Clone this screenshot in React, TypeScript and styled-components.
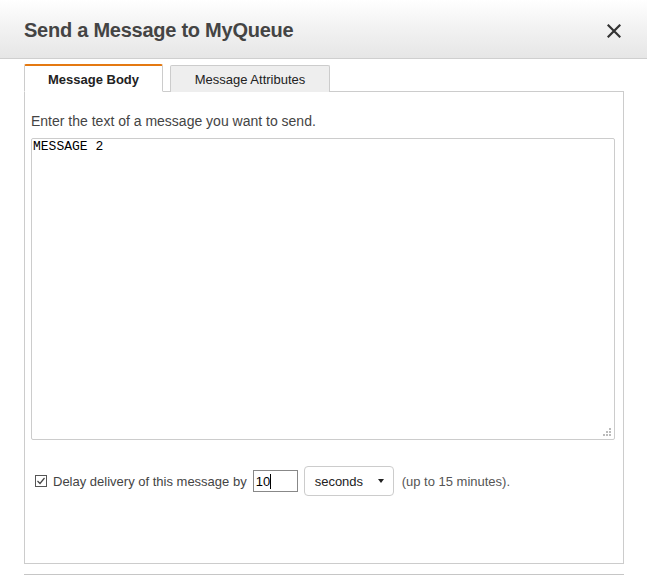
import React from "react";
import styled, { createGlobalStyle } from "styled-components";

const Global = createGlobalStyle`
  html, body { margin: 0; padding: 0; background: #fff; }
  body { font-family: Arial, "Liberation Sans", sans-serif; color: #444; }
`;

const Dialog = styled.div`
  width: 647px;
  height: 575px;
  display: flex;
  flex-direction: column;
  overflow: hidden;
`;

const Header = styled.header`
  height: 58px;
  border-bottom: 1px solid #cfcfcf;
  background: linear-gradient(to bottom, #ffffff 0%, #f4f4f4 40%, #e6e6e6 100%);
  display: flex;
  align-items: center;
  justify-content: space-between;
  padding: 0 24px;
  flex-shrink: 0;
`;

const Title = styled.h1`
  margin: 0;
  font-size: 20px;
  font-weight: bold;
  color: #444;
  letter-spacing: -0.25px;
  padding-top: 3px;
`;

const Close = styled.button`
  border: 0;
  background: transparent;
  padding: 0;
  width: 16px;
  height: 16px;
  margin-right: 1px;
  margin-top: 4px;
  display: flex;
  align-items: center;
  justify-content: center;
  cursor: pointer;
`;

const Body = styled.div`
  padding: 5px 23px 0 24px;
  display: flex;
  flex-direction: column;
`;

const Tabs = styled.div`
  display: flex;
  align-items: flex-end;
  gap: 7px;
  position: relative;
  z-index: 1;
  margin-bottom: -1px;
`;

const Tab = styled.div<{ $active?: boolean }>`
  box-sizing: border-box;
  display: flex;
  align-items: center;
  justify-content: center;
  font-size: 13px;
  color: #222;
  border: 1px solid #cccccc;
  border-radius: 2px 2px 0 0;
  ${(p) =>
    p.$active
      ? `
    width: 139px;
    height: 28px;
    border-top: 2px solid #e47911;
    border-bottom: 1px solid #fff;
    background: #fff;
    font-weight: bold;
    padding-top: 1px;
  `
      : `
    width: 160px;
    height: 27px;
    background: #eeeeee;
    border-bottom: 0;
    padding-top: 1px;
  `}
`;

const Panel = styled.section`
  box-sizing: border-box;
  height: 473px;
  border: 1px solid #cccccc;
  padding: 0 8px 0 6px;
  display: flex;
  flex-direction: column;
`;

const Prompt = styled.p`
  margin: 21px 0 0 0;
  font-size: 14px;
  line-height: 17px;
  color: #444;
`;

const AreaWrap = styled.div`
  position: relative;
  margin-top: 8px;
  width: 584px;
  height: 302px;
`;

const TextArea = styled.textarea`
  box-sizing: border-box;
  width: 100%;
  height: 100%;
  border: 1px solid #cccccc;
  border-radius: 2px;
  padding: 1px 1px;
  resize: none;
  font-family: "Courier New", "Liberation Mono", monospace;
  font-size: 13px;
  line-height: 14px;
  color: #000;
  outline: none;
`;

const Grip = styled.svg`
  position: absolute;
  right: 3px;
  bottom: 3px;
`;

const DelayRow = styled.div`
  display: flex;
  align-items: center;
  margin-top: 26px;
  margin-left: 4px;
  font-size: 13px;
  color: #444;
`;

const Check = styled.span`
  box-sizing: border-box;
  width: 12px;
  height: 12px;
  border: 1px solid #555;
  background: #fff;
  display: inline-flex;
  margin-right: 6px;
`;

const NumInput = styled.div`
  box-sizing: border-box;
  width: 45px;
  height: 22px;
  margin-left: 6px;
  border: 1px solid #888;
  display: flex;
  align-items: center;
  padding-left: 2px;
  font-size: 13px;
  color: #000;
`;

const Caret = styled.span`
  display: inline-block;
  width: 1px;
  height: 15px;
  background: #000;
`;

const Select = styled.div`
  box-sizing: border-box;
  width: 90px;
  height: 30px;
  margin-left: 6px;
  border: 1px solid #cccccc;
  border-radius: 4px;
  display: flex;
  align-items: center;
  justify-content: space-between;
  padding: 0 9px 0 10px;
  font-size: 13px;
  color: #222;
  background: #fff;
`;

const Arrow = styled.span`
  width: 0;
  height: 0;
  border-left: 3px solid transparent;
  border-right: 3px solid transparent;
  border-top: 4px solid #222;
`;

const Note = styled.span`
  margin-left: 8px;
  font-size: 13px;
  color: #555;
`;

const Divider = styled.hr`
  margin: 10px 0 0 0;
  border: 0;
  border-top: 1px solid #c6c6c6;
  width: 600px;
`;

export default function App() {
  return (
    <Dialog>
      <Global />
      <Header>
        <Title>Send a Message to MyQueue</Title>
        <Close aria-label="Close">
          <svg width="14" height="14" viewBox="0 0 14 14">
            <path d="M1.5 1.5 L12.5 12.5 M12.5 1.5 L1.5 12.5" stroke="#333" strokeWidth="2.2" strokeLinecap="square" />
          </svg>
        </Close>
      </Header>
      <Body>
        <Tabs>
          <Tab $active>Message Body</Tab>
          <Tab>Message Attributes</Tab>
        </Tabs>
        <Panel>
          <Prompt>Enter the text of a message you want to send.</Prompt>
          <AreaWrap>
            <TextArea defaultValue="MESSAGE 2" spellCheck={false} />
            <Grip width="9" height="9" viewBox="0 0 9 9">
              <g fill="#bbb">
                <rect x="6" y="0" width="2" height="2" />
                <rect x="3" y="3" width="2" height="2" />
                <rect x="6" y="3" width="2" height="2" />
                <rect x="0" y="6" width="2" height="2" />
                <rect x="3" y="6" width="2" height="2" />
                <rect x="6" y="6" width="2" height="2" />
              </g>
            </Grip>
          </AreaWrap>
          <DelayRow>
            <Check>
              <svg width="10" height="10" viewBox="0 0 10 10">
                <path d="M1.5 5 L4 7.5 L8.5 2" fill="none" stroke="#444" strokeWidth="1.2" />
              </svg>
            </Check>
            Delay delivery of this message by
            <NumInput>
              10<Caret />
            </NumInput>
            <Select>
              seconds
              <Arrow />
            </Select>
            <Note>(up to 15 minutes).</Note>
          </DelayRow>
        </Panel>
        <Divider />
      </Body>
    </Dialog>
  );
}
